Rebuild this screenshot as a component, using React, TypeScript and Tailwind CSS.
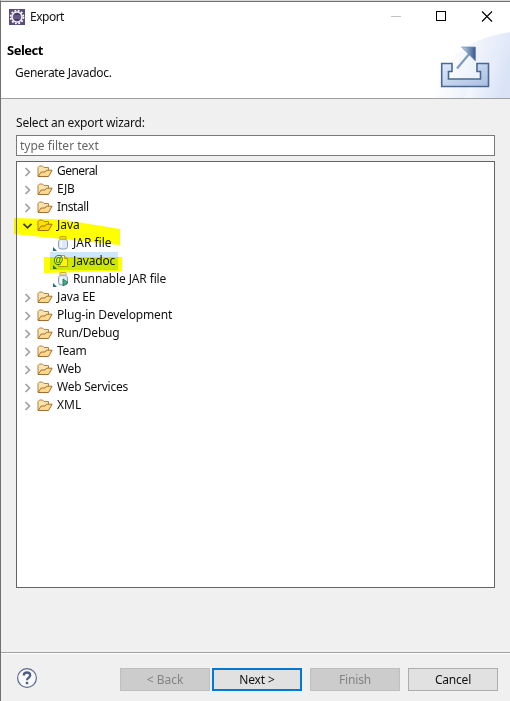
import React from "react";

const Folder = () => (
  <svg width="16" height="14" viewBox="0 0 16 14" className="shrink-0">
    <path d="M1 12V3.500L2.500 2h3L7 3.500h4.500V6" fill="#fbe3ae" stroke="#b9813f" />
    <path d="M1 12.500L4.200 8H8l1.500-1.800h5.600L11.500 12.500z" fill="#fbd98c" stroke="#a86c2c" />
  </svg>
);

const Chevron = ({ open }: { open?: boolean }) => (
  <svg width="11" height="10" viewBox="0 0 11 10" className="shrink-0">
    {open ? (
      <path d="M1.500 2.800L5.500 6.800L9.500 2.800" fill="none" stroke="#404020" strokeWidth="1.800" />
    ) : (
      <path d="M3.500 1L7.500 5L3.500 9" fill="none" stroke="#a0a0a0" strokeWidth="1.700" />
    )}
  </svg>
);

const Jar = ({ run }: { run?: boolean }) => (
  <svg width="17" height="16" viewBox="0 0 17 16" className="shrink-0">
    <path d="M0 12v4h4z" fill="#27697f" />
    <path d="M7.500 4L5.500 6.200v5.300q0 2.500 2.500 2.500h4q2.500 0 2.500-2.500V6.200L12.500 4z" fill="#dce7f8" stroke="#8b9fc4" />
    <rect x="6.700" y="1.500" width="6.600" height="2.700" rx="1" fill="#f6dfb4" stroke="#b79a68" strokeWidth="0.800" />
    <path d="M8.300 6v6" stroke="#fff" strokeWidth="1.500" />
    {run && <path d="M10 8v7l5-3.500z" fill="#45b078" stroke="#197343" strokeWidth="0.800" />}
  </svg>
);

const JavadocIcon = () => (
  <svg width="17" height="16" viewBox="0 0 17 16" className="shrink-0">
    <path d="M5.500 2.500h6l3 3v8h-9z" fill="#fbf8e2" stroke="#b79c4c" />
    <path d="M11.500 2.500v3h3" fill="#e8cf7a" stroke="#b79c4c" />
    <circle cx="5.500" cy="6.800" r="4.200" fill="#e6f1dc" />
    <path d="M0 12v4h4z" fill="#27697f" />
    <text x="0.500" y="10" fontSize="10" fontWeight="bold" fill="#1f6b45" fontFamily="Liberation Sans, sans-serif">@</text>
  </svg>
);

const rows: { label: string; kind: string; cls: string }[] = [
  { label: "General", kind: "folder", cls: "tracking-[-0.55px]" },
  { label: "EJB", kind: "folder", cls: "tracking-[-0.3px]" },
  { label: "Install", kind: "folder", cls: "tracking-[-0.4px]" },
  { label: "Java", kind: "open", cls: "" },
  { label: "JAR file", kind: "jar", cls: "" },
  { label: "Javadoc", kind: "doc", cls: "tracking-[-0.15px]" },
  { label: "Runnable JAR file", kind: "run", cls: "tracking-[-0.13px]" },
  { label: "Java EE", kind: "folder", cls: "tracking-[-0.15px]" },
  { label: "Plug-in Development", kind: "folder", cls: "tracking-[-0.17px]" },
  { label: "Run/Debug", kind: "folder", cls: "tracking-[-0.23px]" },
  { label: "Team", kind: "folder", cls: "tracking-[-0.3px]" },
  { label: "Web", kind: "folder", cls: "tracking-[-0.3px]" },
  { label: "Web Services", kind: "folder", cls: "tracking-[-0.25px]" },
  { label: "XML", kind: "folder", cls: "" },
];

const Row = ({ label, kind, cls }: { label: string; kind: string; cls: string }) => {
  if (kind === "folder" || kind === "open") {
    return (
      <div className="flex h-[18px] items-center pl-[5px]">
        <span className="flex pt-[2px]"><Chevron open={kind === "open"} /></span>
        <span className="flex pl-[4px]"><Folder /></span>
        <span className={"pl-[4px] " + cls}>{label}</span>
      </div>
    );
  }
  return (
    <div className="flex h-[18px] items-center pl-[33px]">
      <div className={"flex h-[18px] items-center pl-[3px] pr-[3px] " + (kind === "doc" ? "bg-[#cce8ff]" : "")}>
        {kind === "doc" ? <JavadocIcon /> : <Jar run={kind === "run"} />}
        <span className={"pl-[3px] " + cls}>{label}</span>
      </div>
    </div>
  );
};

const btn = "flex h-[23px] w-[90px] items-center justify-center border";

export default function App() {
  return (
    <div className="relative flex h-[701px] w-[510px] flex-col overflow-hidden border-t border-l border-t-[#d5dad6] border-l-[#707070] bg-[#f0f0f0] font-['Noto_Sans','Noto_Sans_CJK_KR',sans-serif] text-[12px] leading-[18px] whitespace-nowrap text-[#111]">
      <header className="relative flex h-[98px] shrink-0 flex-col border-t border-b border-t-[#707070] border-b-[#a0a0a0] bg-white">
        <svg className="absolute right-0 bottom-0" width="80" height="68" viewBox="0 0 80 68">
          <defs>
            <linearGradient id="sky" x1="0" y1="0" x2="1" y2="0.3">
              <stop offset="0.2" stopColor="#fff" />
              <stop offset="1" stopColor="#d6e1f6" />
            </linearGradient>
            <linearGradient id="tray" x1="0" y1="0" x2="1" y2="1">
              <stop offset="0" stopColor="#dfe9f8" />
              <stop offset="1" stopColor="#a9bee2" />
            </linearGradient>
            <linearGradient id="arrow" x1="0" y1="0" x2="1" y2="0">
              <stop offset="0" stopColor="#c9d7ec" />
              <stop offset="1" stopColor="#36598f" />
            </linearGradient>
          </defs>
          <path d="M5 68Q12 12 80 2V68z" fill="url(#sky)" opacity="0.8" />
          <path d="M35 68Q45 35 80 22V68z" fill="url(#sky)" opacity="0.5" />
          <path d="M11.700 33.500h10.300v8h-3.500v7.500h32v-7.500h-3.500v-8h11.500v23h-46.800z" fill="url(#tray)" stroke="#476894" strokeWidth="1.600" />
          <path d="M27 38.500L40 23" stroke="#7f9ac2" strokeWidth="2.200" />
          <path d="M31.500 17h14v14z" fill="url(#arrow)" stroke="#6d8ab5" strokeWidth="0.700" />
        </svg>
        <div className="flex h-[30px] items-center pl-[8px]">
          <svg width="16" height="16" viewBox="0 0 16 16">
            <rect width="16" height="16" fill="#5b4b7d" />
            <circle cx="8" cy="8" r="6.400" fill="none" stroke="#fff" strokeWidth="1.800" strokeDasharray="1.800 1.551" />
            <circle cx="8" cy="8" r="5" fill="#463a69" stroke="#f1eef8" strokeWidth="1.600" />
            <path d="M4 7h8M4 9h8" stroke="#8679a8" />
          </svg>
          <span className="pl-[5px] tracking-[-0.5px]">Export</span>
          <svg className="mr-px ml-auto" width="120" height="30" viewBox="0 0 120 30">
            <path d="M2 14.500h10" stroke="#c3c3c3" />
            <rect x="47.500" y="9.500" width="9" height="9" fill="none" stroke="#000" />
            <path d="M93 9.500l10 10M103 9.500l-10 10" stroke="#000" strokeWidth="1.100" />
          </svg>
        </div>
        <div className="h-[22px] pt-[9px] pl-[6px] text-[13px] font-bold tracking-[-0.5px] text-black">Select</div>
        <div className="pt-[10px] pl-[14px] tracking-[-0.3px]">Generate Javadoc.</div>
      </header>
      <main className="flex h-[554px] shrink-0 flex-col border-b border-[#a0a0a0] px-[15px] pt-[15px]">
        <div className="h-[21px] tracking-[-0.21px]">Select an export wizard:</div>
        <div className="flex h-[21px] w-[479px] items-center border border-[#7a7a7a] bg-white pl-[3px] text-[#666]">type filter text</div>
        <div className="mt-[5px] h-[427px] w-[479px] border border-[#646464] bg-white">
          {rows.map((r) => <Row key={r.label} {...r} />)}
        </div>
      </main>
      <footer className="flex flex-1 items-start border-t border-white pt-[14px] pl-[15px]">
        <svg className="-mt-px" width="22" height="22" viewBox="0 0 22 22">
          <circle cx="11" cy="11" r="9.400" fill="#f8f9fb" stroke="#5b6988" strokeWidth="1.200" />
          <path d="M7.800 8.500q0-3 3.200-3t3.200 2.800q0 1.600-1.800 2.600Q11 11.700 11 13.300" fill="none" stroke="#516083" strokeWidth="2.300" />
          <rect x="9.800" y="14.800" width="2.400" height="2.400" fill="#516083" />
        </svg>
        <div className={btn + " ml-[82px] border-[#bfbfbf] bg-[#ccc] text-[#838383]"}>&lt; Back</div>
        <div className={btn + " ml-[2px] border-2 border-[#0078d7] bg-[#e1e1e1] tracking-[-0.1px]"}>Next &gt;</div>
        <div className={btn + " ml-[8px] border-[#bfbfbf] bg-[#ccc] tracking-[-0.2px] text-[#838383]"}>Finish</div>
        <div className={btn + " ml-[8px] border-[#adadad] bg-[#e1e1e1] tracking-[-0.2px]"}>Cancel</div>
      </footer>
      <svg className="pointer-events-none absolute top-0 left-0 mix-blend-multiply" width="130" height="280" viewBox="1 1 130 280">
        <path d="M14 218L62 219.500L120 229V245L14 234z" fill="#ff0" />
        <path d="M44 257H122V271L44 273z" fill="#ff0" />
      </svg>
    </div>
  );
}
